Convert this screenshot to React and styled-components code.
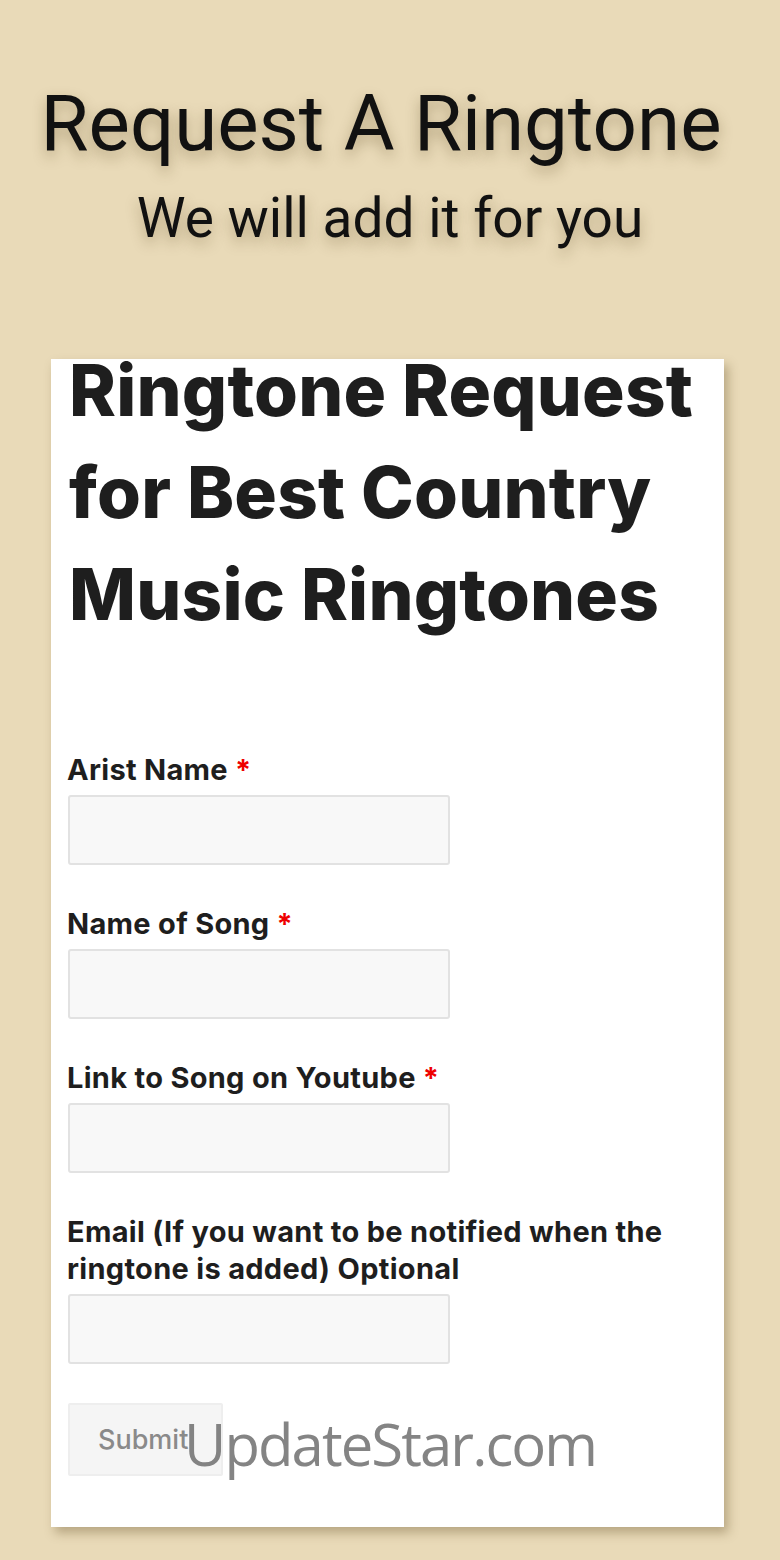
import React from 'react';
import styled, { createGlobalStyle } from 'styled-components';

const GlobalStyle = createGlobalStyle`
  html, body {
    margin: 0;
    padding: 0;
    background: #e9dab8;
  }
  * {
    box-sizing: border-box;
  }
`;

const Page = styled.div`
  position: relative;
  width: 780px;
  min-height: 1560px;
  background: #e9dab8;
  padding-top: 82px;
  padding-bottom: 32px;
`;

const Hero = styled.header`
  display: flex;
  flex-direction: column;
  align-items: center;
  font-family: Roboto, "Liberation Sans", sans-serif;
  color: #111;
  text-shadow: 0 6px 14px rgba(80, 60, 20, 0.35);
`;

const HeroTitle = styled.h1`
  margin: 0;
  padding-right: 18px;
  font-size: 78px;
  font-weight: 400;
  line-height: 84px;
`;

const HeroSubtitle = styled.p`
  margin: 22px 0 0;
  font-size: 55px;
  font-weight: 400;
  line-height: 60px;
`;

const Card = styled.section`
  display: flow-root;
  width: 673px;
  margin: 111px 0 0 51px;
  background: #fff;
  padding: 0 16px 51px 16px;
  box-shadow: 4px 6px 10px rgba(90, 70, 30, 0.35);
  font-family: Inter, "Noto Sans", sans-serif;
`;

const CardTitle = styled.h2`
  margin: -20px 0 0 2px;
  font-size: 71px;
  font-weight: 800;
  line-height: 102px;
  color: #1e1e1e;
  letter-spacing: 0.2px;
`;

const Form = styled.form`
  display: flex;
  flex-direction: column;
  margin-top: 106px;
`;

const Field = styled.div`
  display: flex;
  flex-direction: column;
  margin-bottom: ${(p) => (p.$last ? '39px' : '40px')};
`;

const Label = styled.label`
  font-size: 29px;
  font-weight: 700;
  line-height: 37px;
  letter-spacing: 0.3px;
  color: #1e1e1e;
  margin-bottom: 7px;
`;

const Required = styled.span`
  color: #e00;
  margin-left: 7px;
`;

const Input = styled.input`
  width: 382px;
  height: 70px;
  margin-left: 1px;
  border: 2px solid #e2e2e2;
  border-radius: 3px;
  background: #f8f8f8;
  font-size: 24px;
  padding: 0 14px;
  outline: none;
`;

const SubmitButton = styled.button`
  width: 155px;
  height: 73px;
  margin-left: 1px;
  border: 2px solid #eeeeee;
  border-radius: 2px;
  background: #f5f5f5;
  color: #8a8a8a;
  font-family: Inter, "Noto Sans", sans-serif;
  font-size: 27px;
  font-weight: 500;
  text-align: left;
  padding: 0 0 0 28px;
`;

const Watermark = styled.div`
  position: absolute;
  left: 184px;
  top: 1404px;
  font-family: "Open Sans", "Noto Sans", sans-serif;
  font-size: 58px;
  font-weight: 400;
  color: rgba(110, 110, 110, 0.85);
  letter-spacing: -1.9px;
  pointer-events: none;
`;

const fields = [
  { label: 'Arist Name', required: true },
  { label: 'Name of Song', required: true },
  { label: 'Link to Song on Youtube', required: true },
  { label: 'Email (If you want to be notified when the ringtone is added) Optional', required: false },
];

export default function App() {
  return (
    <>
      <GlobalStyle />
      <Page>
        <Hero>
          <HeroTitle>Request A Ringtone</HeroTitle>
          <HeroSubtitle>We will add it for you</HeroSubtitle>
        </Hero>
        <Card>
          <CardTitle>
            Ringtone Request
            <br />
            for Best Country
            <br />
            Music Ringtones
          </CardTitle>
          <Form onSubmit={(e) => e.preventDefault()}>
            {fields.map((f, i) => (
              <Field key={f.label} $last={i === fields.length - 1}>
                <Label>
                  {f.label}
                  {f.required && <Required>*</Required>}
                </Label>
                <Input type={f.required ? 'text' : 'email'} />
              </Field>
            ))}
            <div>
              <SubmitButton type="submit">Submit</SubmitButton>
            </div>
          </Form>
        </Card>
        <Watermark>UpdateStar.com</Watermark>
      </Page>
    </>
  );
}
